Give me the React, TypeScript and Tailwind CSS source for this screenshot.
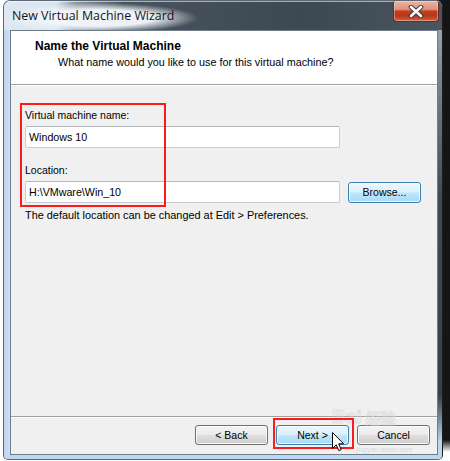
import React from "react";

function WinButton({
  label,
  blue = false,
  className = "",
}: {
  label: string;
  blue?: boolean;
  className?: string;
}) {
  return (
    <div
      className={
        "flex items-center justify-center rounded-[3px] border text-[10.5px] leading-[13px] text-black " +
        (blue
          ? "border-[#3c7fb1] [background-image:linear-gradient(to_bottom,#ecf7fd_0%,#dbf1fc_48%,#bfe6fc_52%,#a9d9f4_100%)] shadow-[inset_0_0_0_1px_rgba(255,255,255,0.75)] "
          : "border-[#707070] [background-image:linear-gradient(to_bottom,#f3f3f3_0%,#ebebeb_48%,#dedede_52%,#cfcfcf_100%)] shadow-[inset_0_0_0_1px_rgba(255,255,255,0.8)] ") +
        className
      }
    >
      {label}
    </div>
  );
}

function CloseButton() {
  return (
    <div className="mr-[3px] flex h-[21px] w-[46px] items-center justify-center rounded-b-[4px] rounded-t-[2px] border border-t-0 border-[#6b2a1f] [background-image:linear-gradient(to_bottom,#eab5a7_0%,#de917b_42%,#c4401f_50%,#b9341a_72%,#d2603f_100%)] shadow-[inset_0_0_0_1px_rgba(255,255,255,0.35)]">
      <svg width="16" height="13" viewBox="0 0 16 13">
        <path
          d="M3 2 L13 11 M13 2 L3 11"
          stroke="#3a3a3a"
          strokeWidth="4.6"
          strokeLinecap="round"
          fill="none"
        />
        <path
          d="M3 2 L13 11 M13 2 L3 11"
          stroke="#ffffff"
          strokeWidth="2.6"
          strokeLinecap="round"
          fill="none"
        />
      </svg>
    </div>
  );
}

export default function App() {
  return (
    <div className="relative flex h-[461px] w-[450px] overflow-hidden font-['Liberation_Sans',Arial,sans-serif] [background-image:linear-gradient(to_bottom,rgba(255,255,255,0)_0px,rgba(255,255,255,0)_440px,#ffffff_452px),linear-gradient(90deg,#ffffff_0px,#ffffff_225px,#151515_225px)]">
      <div className="w-[3px] shrink-0" />

      {/* Window */}
      <div className="flex h-[460px] w-[440px] shrink-0 flex-col overflow-hidden rounded-b-[5px] rounded-t-[7px] border border-[#5b6773] border-r-[#1d1d1d] bg-[#c4daf1]">
        {/* Title bar */}
        <div className="flex h-[29px] shrink-0 items-start justify-between shadow-[inset_0_1px_0_rgba(255,255,255,0.55)] [background-image:radial-gradient(ellipse_100px_15px_at_94px_17px,rgba(241,245,250,0.98)_55%,rgba(241,245,250,0)_100%),linear-gradient(90deg,#dde7f2_0px,#dbe5f0_52px,#8c97a2_72px,#4a545e_120px,#3e4852_300px,#4a5561_438px)]">
          <div className="pl-[8px] pt-[7px] font-['Open_Sans','Noto_Sans',sans-serif] text-[12.4px] leading-[16px] text-[#151515]">
            New Virtual Machine Wizard
          </div>
          <CloseButton />
        </div>

        {/* Middle row: frames + client area */}
        <div className="flex h-[425px] shrink-0">
          <div className="w-[6px] shrink-0 [background-image:linear-gradient(90deg,#bcd4ee_0%,#cde1f6_100%)]" />
          <div className="flex w-[428px] shrink-0 flex-col border border-[#6f7d8b] bg-[#f0f0f0]">
            {/* Header */}
            <div className="flex h-[53px] shrink-0 flex-col bg-white pl-[24px] pt-[9px]">
              <div className="text-[12px] font-bold leading-[13px] text-black">
                Name the Virtual Machine
              </div>
              <div className="mt-[3px] pl-[23px] text-[10.8px] leading-[13px] text-black">
                What name would you like to use for this virtual machine?
              </div>
            </div>
            <div className="h-[1px] shrink-0 bg-[#a0a0a0]" />
            <div className="h-[1px] shrink-0 bg-white" />

            {/* Body */}
            <div className="flex h-[330px] shrink-0 flex-col pl-[14px] pt-[23px]">
              <div className="text-[10.5px] leading-[13px] text-black">
                Virtual machine name:
              </div>
              <div className="mt-[4px] flex h-[22px] w-[315px] items-center rounded-[2px] border border-[#c9cdd2] border-t-[#b5b9bf] bg-white pl-[3px] text-[10.7px] text-black">
                Windows 10
              </div>
              <div className="mt-[16px] text-[10.5px] leading-[13px] text-black">
                Location:
              </div>
              <div className="mt-[4px] flex items-center">
                <div className="flex h-[22px] w-[315px] items-center rounded-[2px] border border-[#c9cdd2] border-t-[#b5b9bf] bg-white pl-[3px] text-[10.7px] text-black">
                  H:\VMware\Win_10
                </div>
                <WinButton label="Browse..." blue className="ml-[8px] h-[21px] w-[73px]" />
              </div>
              <div className="mt-[6px] text-[10.9px] leading-[13px] text-black">
                The default location can be changed at Edit &gt; Preferences.
              </div>
            </div>

            <div className="h-[1px] shrink-0 bg-[#a0a0a0]" />
            <div className="h-[1px] shrink-0 bg-white" />

            {/* Footer buttons */}
            <div className="flex h-[36px] shrink-0 items-start justify-end gap-[8px] pr-[7px] pt-[7px]">
              <WinButton label="< Back" className="h-[20px] w-[73px]" />
              <WinButton label="Next >" blue className="h-[20px] w-[73px]" />
              <WinButton label="Cancel" className="h-[20px] w-[73px]" />
            </div>
          </div>
          <div className="w-[4px] shrink-0 [background-image:linear-gradient(to_bottom,#9aa4ac_0%,#78838c_12%,#3d4953_40%,#34414b_86%,#bdd7f0_97%)]" />
        </div>

        <div className="h-[4px] shrink-0 bg-[#bed7f0]" />
      </div>

      <div className="w-[7px] shrink-0" />

      {/* Baidu watermark (faint) */}
      <div className="pointer-events-none absolute left-[332px] top-[408px] flex items-end gap-[4px] opacity-60">
        <span className="text-[19px] font-bold leading-[18px] text-transparent [-webkit-text-stroke:1px_#d6d6d6]">
          Bai
        </span>
        <span className="font-['Noto_Sans_CJK_SC',sans-serif] text-[15px] font-bold leading-[17px] text-transparent [-webkit-text-stroke:1px_#d6d6d6]">
          经验
        </span>
      </div>
      <div className="pointer-events-none absolute left-[356px] top-[446px] text-[7px] leading-[8px] text-[#d0d0d0] opacity-70">
        jingyan.baidu.com
      </div>

      {/* Red annotation boxes */}
      <div className="pointer-events-none absolute left-[20px] top-[103px] h-[104px] w-[146px] border-2 border-[#ff1a1a]" />
      <div className="pointer-events-none absolute left-[273px] top-[418px] h-[31px] w-[81px] border-2 border-[#ff1a1a]" />

      {/* Mouse cursor */}
      <svg
        className="pointer-events-none absolute left-[331px] top-[431px]"
        width="14"
        height="21"
        viewBox="0 0 14 21"
      >
        <path
          d="M1.5 1.5 L1.5 17.5 L5.2 13.8 L7.8 19.6 L10.2 18.6 L7.7 12.8 L12.6 12.8 Z"
          fill="#ffffff"
          stroke="#000000"
          strokeWidth="1"
          strokeLinejoin="miter"
        />
      </svg>
    </div>
  );
}
